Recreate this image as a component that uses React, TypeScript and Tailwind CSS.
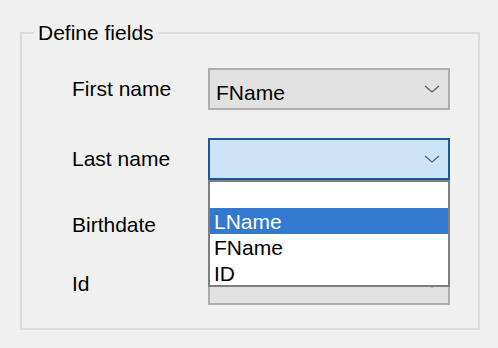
import React from 'react'

const FONT = { fontFamily: "'Liberation Sans', Arial, sans-serif" }

function Chevron() {
  return (
    <svg width="16" height="8" viewBox="0 0 16 8" className="shrink-0">
      <polyline points="1,1 8,7 15,1" fill="none" stroke="#606060" strokeWidth="1.3" />
    </svg>
  )
}

function Combo({ value, active }: { value?: string; active?: boolean }) {
  return (
    <div
      className={
        'flex h-[42px] w-[242px] items-center justify-between border-2 pl-[6px] pr-[8px] ' +
        (active ? 'border-[#1e57a0] bg-[#cce4f7]' : 'border-[#adadad] bg-[#e1e1e1]')
      }
    >
      <span className="mt-[8px] text-[21px] leading-[24px] text-black">{value}</span>
      <Chevron />
    </div>
  )
}

const OPTIONS = ['', 'LName', 'FName', 'ID']

export default function App() {
  return (
    <div className="h-[348px] w-[498px] overflow-hidden bg-[#f0f0f0] pt-[21px] pl-[20px]" style={FONT}>
      <fieldset className="w-[460px] border-2 border-[#dcdcdc] pb-[23px]">
        <legend className="ml-[12px] px-[4px] text-[21px] leading-[24px] text-black">Define fields</legend>

        <div className="flex flex-col pt-[23px] pl-[50px]">
          <div className="flex items-center">
            <span className="w-[136px] text-[21px] leading-[24px]">First name</span>
            <Combo value="FName" />
          </div>

          <div className="mt-[28px] flex items-center">
            <span className="w-[136px] text-[21px] leading-[24px]">Last name</span>
            <div className="relative">
              <Combo active />
              {/* open drop-down list */}
              <div className="absolute left-0 top-[42px] z-10 w-[242px] border-2 border-[#7f7f7f] bg-white">
                {OPTIONS.map((o, i) => (
                  <div
                    key={i}
                    className={
                      'pl-[4px] pt-[2px] text-[21px] leading-[24px] ' +
                      (i === 3 ? 'h-[25px] ' : 'h-[26px] ') +
                      (o === 'LName' ? 'bg-[#3379d0] text-white' : 'text-black')
                    }
                  >
                    {o}
                  </div>
                ))}
              </div>
            </div>
          </div>

          <div className="mt-[24px] flex items-center">
            <span className="w-[136px] text-[21px] leading-[24px]">Birthdate</span>
            <Combo />
          </div>

          <div className="mt-[17px] flex items-center">
            <span className="w-[136px] text-[21px] leading-[24px]">Id</span>
            <Combo />
          </div>
        </div>
      </fieldset>
    </div>
  )
}
